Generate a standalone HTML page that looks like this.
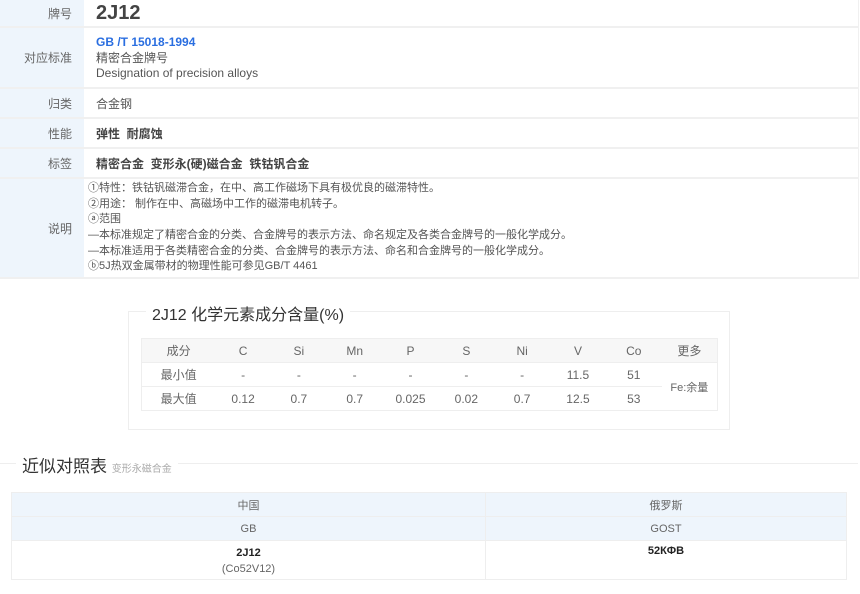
<!DOCTYPE html>
<html><head><meta charset="utf-8"><style>
*{margin:0;padding:0;box-sizing:border-box}
body{width:860px;height:594px;background:#fff;font-family:"Liberation Sans","Noto Sans CJK SC",sans-serif;color:#555;font-size:12px;position:relative;overflow:hidden}
.row{position:absolute;left:0;width:859px;border-bottom:2px solid #f0f0f0;display:flex}
.lab{width:84px;background:#eef5fc;text-align:right;padding-right:12px;display:flex;align-items:center;justify-content:flex-end;color:#666}
.val{padding-left:12px;display:flex;flex-direction:column;justify-content:center;line-height:15.5px;flex:1;border-right:1px solid #f0f0f0}
.b{font-weight:bold;color:#444}
.abs{position:absolute}
table{border-collapse:collapse}
.chem td{width:56px;height:24px;text-align:center;color:#666;font-size:12px}
.chem tr.h td{background:#f7f7f7}
.chem tr+tr td{border-top:1px solid #eee}
.cmp td{height:24px;text-align:center;border:1px solid #eee;color:#666;font-size:11px}
.cmp tr.h td{background:#eef5fc}
</style></head><body>
<div class="row" style="top:0;height:28px"><div class="lab">牌号</div><div class="val" style="font-size:20px;font-weight:bold;color:#444;padding-top:2px">2J12</div></div>
<div class="row" style="top:28px;height:61px"><div class="lab">对应标准</div><div class="val" style="padding-top:2px"><span style="color:#2a6ee0;font-weight:bold">GB /T 15018-1994</span><span>精密合金牌号</span><span>Designation of precision alloys</span></div></div>
<div class="row" style="top:89px;height:30px"><div class="lab">归类</div><div class="val" style="padding-top:3px">合金钢</div></div>
<div class="row" style="top:119px;height:30px"><div class="lab">性能</div><div class="val b" style="padding-top:3px">弹性&nbsp; 耐腐蚀</div></div>
<div class="row" style="top:149px;height:30px"><div class="lab">标签</div><div class="val b" style="padding-top:3px">精密合金&nbsp; 变形永(硬)磁合金&nbsp; 铁钴钒合金</div></div>
<div class="row" style="top:179px;height:100px"><div class="lab">说明</div><div class="val" style="padding-left:4px;line-height:15.7px;font-size:11px"><span>①特性：铁钴钒磁滞合金，在中、高工作磁场下具有极优良的磁滞特性。</span><span>②用途： 制作在中、高磁场中工作的磁滞电机转子。</span><span>ⓐ范围</span><span>—本标准规定了精密合金的分类、合金牌号的表示方法、命名规定及各类合金牌号的一般化学成分。</span><span>—本标准适用于各类精密合金的分类、合金牌号的表示方法、命名和合金牌号的一般化学成分。</span><span>ⓑ5J热双金属带材的物理性能可参见GB/T 4461</span></div></div>

<div class="abs" style="left:128px;top:311px;width:602px;height:119px;border:1px solid #eee"></div>
<div class="abs" style="left:146px;top:301px;background:#fff;padding:0 6px;font-size:16px;color:#333">2J12 化学元素成分含量(%)</div>
<table class="chem abs" style="left:141px;top:338px;width:577px;border:1px solid #eee">
<tr class="h"><td style="width:74px">成分</td><td>C</td><td>Si</td><td>Mn</td><td>P</td><td>S</td><td>Ni</td><td>V</td><td>Co</td><td style="width:55px">更多</td></tr>
<tr><td>最小值</td><td>-</td><td>-</td><td>-</td><td>-</td><td>-</td><td>-</td><td>11.5</td><td>51</td><td rowspan="2" style="font-size:11px">Fe:余量</td></tr>
<tr><td>最大值</td><td>0.12</td><td>0.7</td><td>0.7</td><td>0.025</td><td>0.02</td><td>0.7</td><td>12.5</td><td>53</td></tr>
</table>

<div class="abs" style="left:0;top:463px;width:858px;border-top:1px solid #eee"></div>
<div class="abs" style="left:16px;top:452px;background:#fff;padding:0 6px;font-size:17px;color:#333">近似对照表 <span style="font-size:10px;color:#aaa">变形永磁合金</span></div>
<table class="cmp abs" style="left:11px;top:492px;width:836px">
<tr class="h"><td style="width:474px">中国</td><td>俄罗斯</td></tr>
<tr class="h"><td>GB</td><td>GOST</td></tr>
<tr><td style="height:39px;vertical-align:top;padding-top:4px;line-height:16px"><b style="color:#222">2J12</b><br>(Co52V12)</td><td style="vertical-align:top;padding-top:4px"><b style="color:#222">52КФВ</b></td></tr>
</table>
</body></html>
